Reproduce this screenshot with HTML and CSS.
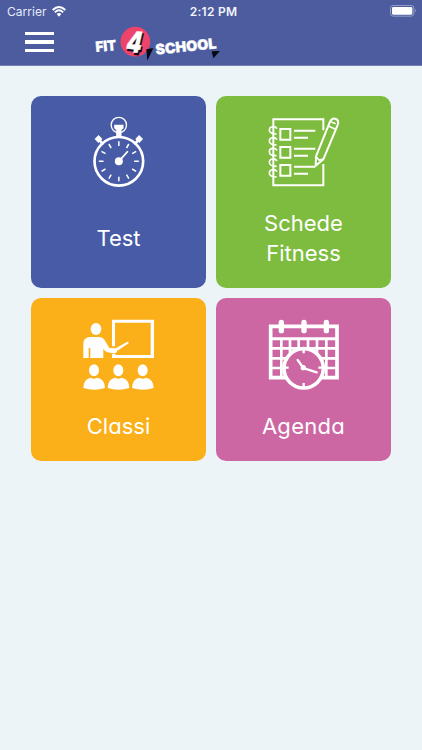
FILE: index.html
```html
<!DOCTYPE html>
<html lang="it">
  <head>
    <meta charset="UTF-8" />
    <meta name="viewport" content="width=device-width, initial-scale=1" />
    <title>Fit 4 School</title>
    <link rel="stylesheet" href="styles.css">
  </head>
  <body>
    <header>
      <!-- Status bar -->
      <div class="status-bar">
        <div class="carrier">
          <span>Carrier</span>
          <svg class="wifi" viewBox="0 0 42 33">
            <path d="M2 12Q21 -6 40 12M8.500 19Q21 7 33.500 19" fill="none" stroke="#fff" stroke-width="5.500" />
            <path d="M14 24Q21 18 28 24L21 32Z" fill="#fff" />
          </svg>
        </div>
        <div class="clock">2:12 PM</div>
        <svg class="battery" viewBox="0 0 81 36">
          <rect x="1.500" y="1.500" width="70" height="32" rx="8" fill="none" stroke="#a3abd3" stroke-width="2.500" />
          <rect x="6" y="6" width="61" height="23" rx="4" fill="#fff" />
          <path d="M75 12q5 5.500 0 11z" fill="#a3abd3" />
        </svg>
      </div>

      <!-- Menu and logo -->
      <div class="nav-bar">
        <button class="menu" aria-label="Menu">
          <span></span>
          <span></span>
          <span></span>
        </button>
        <svg class="logo" viewBox="0 0 420 135">
          <circle cx="151" cy="65" r="44.500" fill="#ee446b" />
          <path d="M184 88l21-4-18 38z" fill="#080812" />
          <path d="M380 94l25-1-20 22z" fill="#080812" />
          <g class="logo-text">
            <text class="shadow" transform="translate(122 101) rotate(5) skewX(-8)" font-size="88" textLength="46" lengthAdjust="spacingAndGlyphs">4</text>
            <text transform="translate(119 95) rotate(5) skewX(-8)" font-size="88" textLength="46" lengthAdjust="spacingAndGlyphs">4</text>
            <text transform="translate(33 96) rotate(-5)" font-size="43" textLength="62" lengthAdjust="spacingAndGlyphs">FIT</text>
            <text transform="translate(213 104) rotate(-6)" font-size="43" textLength="183" lengthAdjust="spacingAndGlyphs">SCHOOL</text>
          </g>
        </svg>
      </div>
    </header>

    <main class="tiles">
      <a class="tile test">
        <svg viewBox="-25.500 0 252 252" fill="none" stroke="#fff">
          <circle cx="100" cy="45" r="23" stroke-width="4" />
          <path d="M86 44h28v11l-6 5v20H92V60l-6-5z" fill="#fff" stroke="none" />
          <circle cx="100" cy="154" r="73" stroke-width="8" />
          <path d="M33 93l12-12M155 81l12 12" stroke-width="16" />
          <path d="M42 90l11 14M158 90l-11 14" stroke-width="8" />
          <path d="M100 94v14M100 200v14M40 154h14M146 154h14M70 102l7 12M123 194l7 12M48 124l12 7M140 177l12 7M48 184l12-7M140 131l12-7M70 206l7-12M123 114l7-12" stroke-width="4.500" />
          <circle cx="100" cy="154" r="12" fill="#fff" stroke="none" />
          <path d="M100 154l26-29" stroke-width="5" stroke-linecap="round" />
        </svg>
        <span class="label">Test</span>
      </a>

      <a class="tile schede">
        <svg viewBox="0 0 252 252" fill="none" stroke="#fff" stroke-width="6">
          <path d="M184 61V28H34V226H184V162" />
          <path d="M55 57h30v32H55zM96 62h64M96 83h42" />
          <path d="M55 111h30v32H55zM96 116h64M96 137h42" />
          <path d="M55 165h30v32H55zM96 170h64M96 191h42" />
          <!-- spiral binding -->
          <path d="M45 56c-6-10-23-7-23 4s12 12 22 12M45 89c-6-10-23-7-23 4s12 12 22 12M45 121c-6-10-23-7-23 4s12 12 22 12M45 153c-6-10-23-7-23 4s12 12 22 12M45 185c-6-10-23-7-23 4s12 12 22 12" stroke-width="5" />
          <!-- pencil -->
          <path class="pencil" d="M161 167L162 139L204 35Q211 22 222 27Q232 32 227 45L184 148Z" stroke-linejoin="round" />
          <path d="M162 140l9 10 13-3M199 48l22 10" stroke-width="5" />
          <path d="M208 36l13 5" stroke-width="5" />
        </svg>
        <span class="label">Schede<br>Fitness</span>
      </a>

      <a class="tile classi">
        <svg viewBox="3 0 252 252" fill="#fff">
          <path d="M108 103V23H234V138H108V126h10v3H224V32H117v71z" />
          <ellipse cx="60" cy="51" rx="16" ry="18" />
          <path d="M22 138V94Q23 77 40 75H70Q80 75 86 84L100 108L119 109L154 89Q159 89 158 94L124 116Q120 126 112 124L94 121Q88 120 82 110V138H43V108H38V138Z" />
          <g>
            <ellipse cx="54" cy="175" rx="15" ry="18" />
            <path d="M22 228q1-28 23-31 9 6 18 0 23 3 24 31-32 10-65 0z" />
            <ellipse cx="127" cy="175" rx="15" ry="18" />
            <path d="M95 228q1-28 23-31 9 6 18 0 23 3 24 31-32 10-65 0z" />
            <ellipse cx="200" cy="175" rx="15" ry="18" />
            <path d="M168 228q1-28 23-31 9 6 18 0 23 3 24 31-32 10-65 0z" />
          </g>
        </svg>
        <span class="label">Classi</span>
      </a>

      <a class="tile agenda">
        <svg viewBox="0 0 252 252" fill="none" stroke="#fff">
          <path d="M26 43H225V197H26z" stroke-width="11" />
          <path d="M26 80H225" stroke-width="9" />
          <path d="M26 109H225M26 139H225M26 168H225M58 80v117M84 80v117M110 80v117M138 80v117M165 80v117M193 80v117" stroke-width="8" />
          <path d="M58 31v25M126 31v25M193 31v25" stroke-width="16" stroke-linecap="round" />
          <circle class="clock-face" cx="125" cy="169" r="59" stroke-width="11" />
          <path d="M125 114v10M125 213v12M70 167h10M169 167h11" stroke-width="7" />
          <path d="M107 144l17 24 40 13" stroke-width="7" stroke-linecap="round" />
          <circle cx="124" cy="167" r="8" fill="#fff" stroke="none" />
        </svg>
        <span class="label">Agenda</span>
      </a>
    </main>
  </body>
</html>
```
FILE: styles.css
```css
* {
  box-sizing: border-box;
}

body {
  margin: 0;
  min-height: 100vh;
  background-color: #ecf4f8;
  font-family: Inter, "Liberation Sans", sans-serif;
  color: #fff;
}

header {
  height: 66px;
  background-color: #4c5c9f;
  border-bottom: 1px solid #7581b5;
}

.status-bar {
  display: grid;
  grid-template-columns: 1fr auto 1fr;
  align-items: center;
  height: 22px;
  padding: 0 5px 0 7px;
  font-size: 12px;
}

.carrier {
  display: flex;
  align-items: center;
  gap: 5px;
  color: #e8eaf5;
  letter-spacing: 0.05px;
}

.wifi {
  width: 14px;
  height: 11px;
}

.clock {
  padding-left: 3px;
  font-weight: 600;
  letter-spacing: 0.25px;
  color: #f3f4fa;
}

.battery {
  width: 27px;
  height: 12px;
  justify-self: end;
}

.nav-bar {
  display: flex;
  align-items: flex-start;
  height: 43px;
}

.menu {
  display: flex;
  flex-direction: column;
  gap: 5px;
  width: 29px;
  margin: 10px 31px 0 25px;
  padding: 0;
  border: 0;
  background: none;
}

.menu span {
  height: 3.3px;
  background-color: #fff;
}

.logo {
  width: 140px;
  height: 45px;
  margin-top: -2px;
}

.logo-text {
  font-family: Inter, sans-serif;
  font-weight: 900;
  fill: #fff;
  stroke: #fff;
  stroke-width: 1;
}

.logo-text .shadow {
  fill: #080812;
  stroke: #080812;
  stroke-width: 3;
}

.tiles {
  display: grid;
  grid-template-columns: 175px 175px;
  grid-template-rows: 192px 163px;
  gap: 10px;
  padding: 30px 31px;
}

.tile {
  display: flex;
  flex-direction: column;
  align-items: center;
  padding: 14px 0 20px;
  border-radius: 10px;
}

.tile svg {
  width: 84px;
  height: 84px;
  margin-bottom: 14px;
}

.label {
  display: flex;
  flex: 1;
  align-items: center;
  font-size: 22px;
  line-height: 30px;
  font-weight: 400;
  font-feature-settings: "cv11";
  text-align: center;
}

.test {
  background-color: #485ba6;
}

.schede {
  background-color: #7dbc3e;
}

.classi {
  background-color: #fbaf18;
}

.agenda {
  background-color: #cd67a4;
}

.agenda .label {
  letter-spacing: 0.3px;
}

.pencil {
  fill: #7dbc3e;
}

.clock-face {
  fill: #cd67a4;
}
```
